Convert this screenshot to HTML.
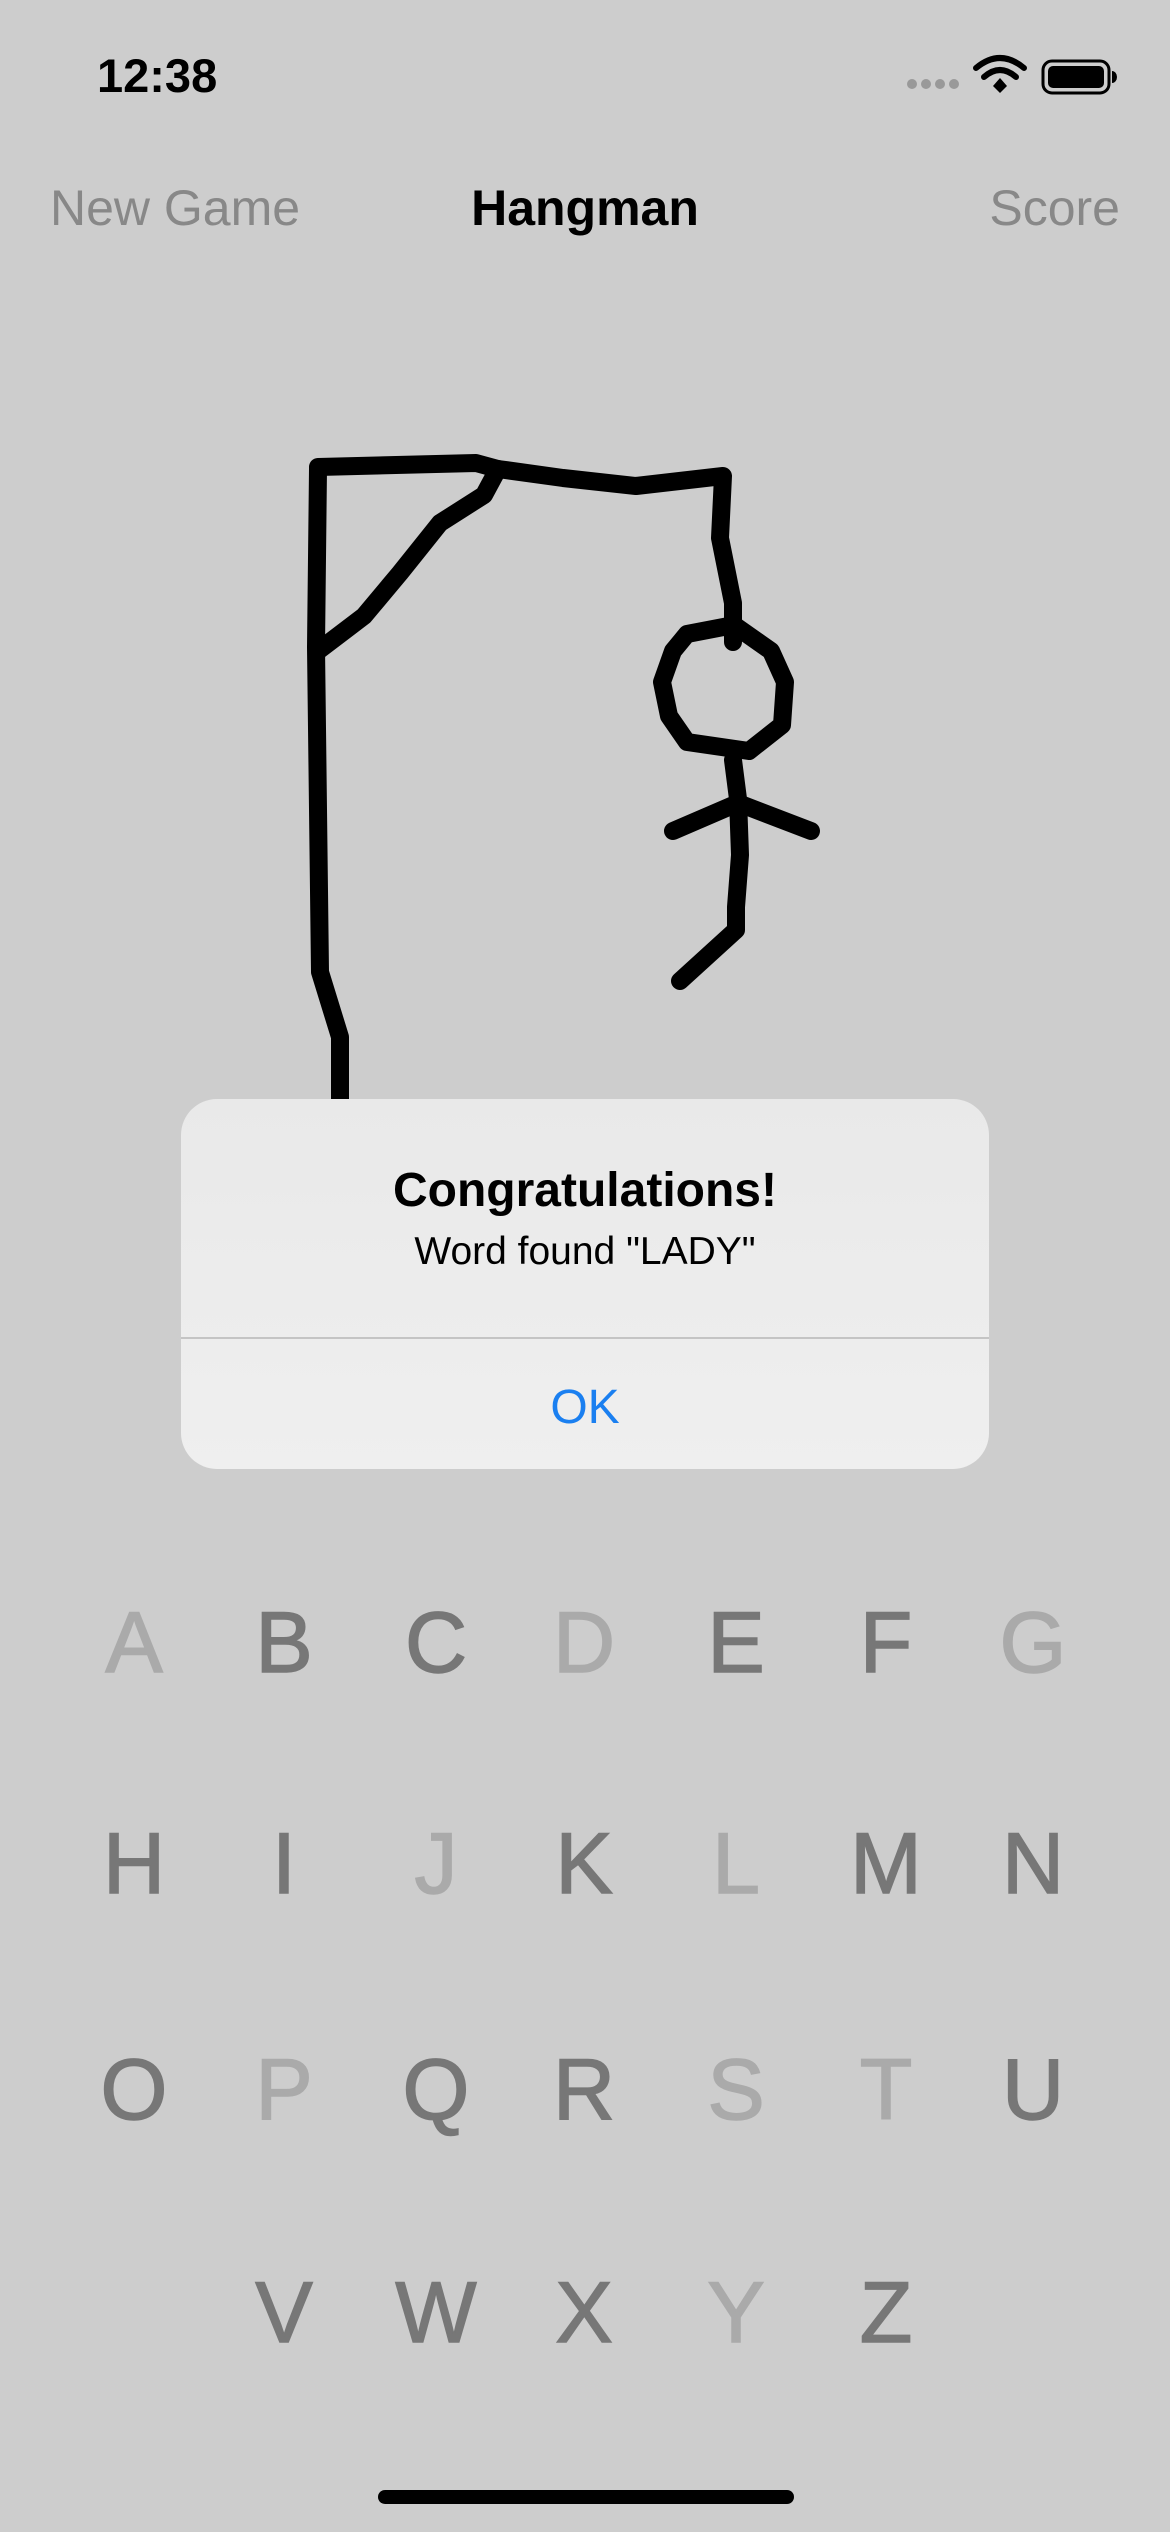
<!DOCTYPE html>
<html><head><meta charset="utf-8"><style>
*{margin:0;padding:0;box-sizing:border-box}
body{width:1170px;height:2532px;background:#cdcdcd;position:relative;overflow:hidden;font-family:"Liberation Sans",sans-serif}
.a{position:absolute}
.nav{top:178px;font-size:50px;color:#888;line-height:60px}
.L{position:absolute;font-size:86px;line-height:100px;width:140px;text-align:center;color:#777;transform:translate(-70px,-50px);-webkit-text-stroke:1.5px currentColor}
.l{color:#aaa}
</style></head><body>
<div class="a" style="left:97px;top:48px;font-size:47px;font-weight:bold;line-height:56px">12:38</div>
<svg class="a" style="left:900px;top:50px" width="230" height="60" viewBox="0 0 230 60">
<g fill="#999"><circle cx="12" cy="34" r="5"/><circle cx="26" cy="34" r="5"/><circle cx="40" cy="34" r="5"/><circle cx="54" cy="34" r="5"/></g>
<g fill="none" stroke="#000" stroke-width="6" stroke-linecap="round"><path d="M76 18 Q100 -2 124 18"/><path d="M84 27 Q100 13 116 27"/></g>
<path d="M93 36 L100 28 L107 36 L100 43Z" fill="#000"/>
<rect x="143" y="11" width="66" height="32" rx="9" fill="none" stroke="#000" stroke-width="3"/>
<rect x="148" y="16" width="56" height="22" rx="5" fill="#000"/>
<path d="M212 21 v12 a5 6 0 0 0 0 -12z" fill="#000"/>
</svg>
<div class="a nav" style="left:50px">New Game</div>
<div class="a nav" style="left:0;width:1170px;text-align:center;color:#000;font-weight:bold">Hangman</div>
<div class="a nav" style="right:50px">Score</div>
<svg class="a" style="left:0;top:0" width="1170" height="1200">
<g fill="none" stroke="#000" stroke-width="18" stroke-linecap="round" stroke-linejoin="round">
<path d="M318 469 L316 647 L320 972 L340 1037 L340 1120"/>
<path d="M318 467 L476 463 L498 469 L563 478 L636 486 L723 476 L720 538 L733 603 L733 642"/>
<path d="M318 651 L364 616 L400 573 L440 523 L484 495 L498 469"/>
<path d="M687 634 L734 625 L771 651 L785 682 L782 725 L749 751 L687 742 L669 716 L662 682 L673 651Z"/>
<path d="M733 760 L738 799 L740 855 L736 907 L736 930 L680 981"/>
<path d="M673 831 L738 803 L811 831"/>
</g></svg>
<div class="a" style="left:181px;top:1099px;width:808px;height:370px;border-radius:36px;background:linear-gradient(#e9e9e9,#efefef);overflow:hidden">
<div style="position:absolute;top:64px;width:100%;text-align:center;font-weight:bold;font-size:48px;line-height:56px">Congratulations!</div>
<div style="position:absolute;top:131px;width:100%;text-align:center;font-size:39px;line-height:44px">Word found "LADY"</div>
<div style="position:absolute;top:238px;width:100%;height:2px;background:#c4c4c4"></div>
<div style="position:absolute;top:281px;width:100%;text-align:center;font-size:48px;line-height:56px;color:#1a7ff0">OK</div>
</div>
<div class="L l" style="left:134px;top:1643px">A</div>
<div class="L" style="left:284px;top:1643px">B</div>
<div class="L" style="left:436px;top:1643px">C</div>
<div class="L l" style="left:584px;top:1643px">D</div>
<div class="L" style="left:736px;top:1643px">E</div>
<div class="L" style="left:886px;top:1643px">F</div>
<div class="L l" style="left:1033px;top:1643px">G</div>
<div class="L" style="left:134px;top:1864px">H</div>
<div class="L" style="left:284px;top:1864px">I</div>
<div class="L l" style="left:436px;top:1864px">J</div>
<div class="L" style="left:584px;top:1864px">K</div>
<div class="L l" style="left:736px;top:1864px">L</div>
<div class="L" style="left:886px;top:1864px">M</div>
<div class="L" style="left:1033px;top:1864px">N</div>
<div class="L" style="left:134px;top:2090px">O</div>
<div class="L l" style="left:284px;top:2090px">P</div>
<div class="L" style="left:436px;top:2090px">Q</div>
<div class="L" style="left:584px;top:2090px">R</div>
<div class="L l" style="left:736px;top:2090px">S</div>
<div class="L l" style="left:886px;top:2090px">T</div>
<div class="L" style="left:1033px;top:2090px">U</div>
<div class="L" style="left:284px;top:2313px">V</div>
<div class="L" style="left:436px;top:2313px">W</div>
<div class="L" style="left:584px;top:2313px">X</div>
<div class="L l" style="left:736px;top:2313px">Y</div>
<div class="L" style="left:886px;top:2313px">Z</div>
<div class="a" style="left:378px;top:2490px;width:416px;height:14px;border-radius:7px;background:#000"></div>
</body></html>
